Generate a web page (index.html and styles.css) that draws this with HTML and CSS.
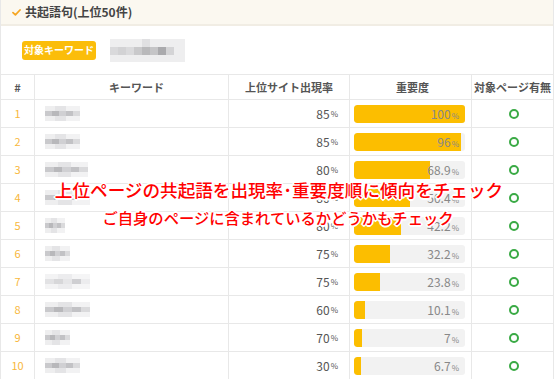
FILE: index.html
```html
<!DOCTYPE html>
<html lang="ja">
<head>
<meta charset="utf-8">
<link rel="stylesheet" href="styles.css">
</head>
<body>
<div class="card">
  <div class="head">
    <svg class="check" width="9" height="7" viewBox="0 0 9 7"><path d="M1 3.6 L3.4 5.8 L8 1" fill="none" stroke="#f5a623" stroke-width="1.8" stroke-linecap="round" stroke-linejoin="round"/></svg>
    <span class="head-title">共起語句(上位50件)</span>
  </div>
  <div class="target">
    <span class="badge">対象キーワード</span>
    <span class="bigblur"><i></i><i></i><i></i><i></i><i></i><i></i><i></i><i></i><i></i></span>
  </div>
  <div class="table">
    <div class="row hrow">
      <div class="c c1">#</div>
      <div class="c c2">キーワード</div>
      <div class="c c3">上位サイト出現率</div>
      <div class="c c4">重要度</div>
      <div class="c c5">対象ページ有無</div>
    </div>
    <div class="row">
      <div class="c c1 num">1</div>
      <div class="c c2"><span class="blur w35"></span></div>
      <div class="c c3 rate">85<small>%</small></div>
      <div class="c c4"><div class="bar"><div class="fill" style="width:100%"></div><span class="val">100<small>%</small></span></div></div>
      <div class="c c5"><span class="ok"></span></div>
    </div>
    <div class="row">
      <div class="c c1 num">2</div>
      <div class="c c2"><span class="blur w35"></span></div>
      <div class="c c3 rate">85<small>%</small></div>
      <div class="c c4"><div class="bar"><div class="fill" style="width:96%"></div><span class="val">96<small>%</small></span></div></div>
      <div class="c c5"><span class="ok"></span></div>
    </div>
    <div class="row">
      <div class="c c1 num">3</div>
      <div class="c c2"><span class="blur w43"></span></div>
      <div class="c c3 rate">80<small>%</small></div>
      <div class="c c4"><div class="bar"><div class="fill" style="width:68.9%"></div><span class="val">68.9<small>%</small></span></div></div>
      <div class="c c5"><span class="ok"></span></div>
    </div>
    <div class="row">
      <div class="c c1 num">4</div>
      <div class="c c2"><span class="blur w45"></span></div>
      <div class="c c3 rate">80<small>%</small></div>
      <div class="c c4"><div class="bar"><div class="fill" style="width:50.4%"></div><span class="val">50.4<small>%</small></span></div></div>
      <div class="c c5"><span class="ok"></span></div>
    </div>
    <div class="row">
      <div class="c c1 num">5</div>
      <div class="c c2"><span class="blur w20"></span></div>
      <div class="c c3 rate">80<small>%</small></div>
      <div class="c c4"><div class="bar"><div class="fill" style="width:42.2%"></div><span class="val">42.2<small>%</small></span></div></div>
      <div class="c c5"><span class="ok"></span></div>
    </div>
    <div class="row">
      <div class="c c1 num">6</div>
      <div class="c c2"><span class="blur w25"></span></div>
      <div class="c c3 rate">75<small>%</small></div>
      <div class="c c4"><div class="bar"><div class="fill" style="width:32.2%"></div><span class="val">32.2<small>%</small></span></div></div>
      <div class="c c5"><span class="ok"></span></div>
    </div>
    <div class="row">
      <div class="c c1 num">7</div>
      <div class="c c2"><span class="blur w45 light"></span></div>
      <div class="c c3 rate">75<small>%</small></div>
      <div class="c c4"><div class="bar"><div class="fill" style="width:23.8%"></div><span class="val">23.8<small>%</small></span></div></div>
      <div class="c c5"><span class="ok"></span></div>
    </div>
    <div class="row">
      <div class="c c1 num">8</div>
      <div class="c c2"><span class="blur w45"></span></div>
      <div class="c c3 rate">60<small>%</small></div>
      <div class="c c4"><div class="bar"><div class="fill" style="width:10.1%"></div><span class="val">10.1<small>%</small></span></div></div>
      <div class="c c5"><span class="ok"></span></div>
    </div>
    <div class="row">
      <div class="c c1 num">9</div>
      <div class="c c2"><span class="blur w25"></span></div>
      <div class="c c3 rate">70<small>%</small></div>
      <div class="c c4"><div class="bar"><div class="fill" style="width:7%"></div><span class="val">7<small>%</small></span></div></div>
      <div class="c c5"><span class="ok"></span></div>
    </div>
    <div class="row">
      <div class="c c1 num">10</div>
      <div class="c c2"><span class="blur w35"></span></div>
      <div class="c c3 rate">30<small>%</small></div>
      <div class="c c4"><div class="bar"><div class="fill" style="width:6.7%"></div><span class="val">6.7<small>%</small></span></div></div>
      <div class="c c5"><span class="ok"></span></div>
    </div>
  </div>
  <div class="overlay">
    <p class="ol1">上位ページの共起語を出現率･重要度順に傾向をチェック</p>
    <p class="ol2">ご自身のページに含まれているかどうかもチェック</p>
  </div>
</div>
</body>
</html>
```
FILE: styles.css
```css
* { box-sizing: border-box; }
html, body { margin: 0; padding: 0; background: #fff; }
body {
  font-family: "Noto Sans CJK JP", "Noto Sans", sans-serif;
  color: #555;
  width: 555px;
  height: 379px;
  overflow: hidden;
}
.card {
  position: relative;
  width: 554px;
  border-left: 1px solid #e8e8e8;
  border-right: 1px solid #e8e8e8;
}
.head {
  height: 26px;
  background: #fbf8f0;
  border-bottom: 2px solid #f1ede4;
  display: flex;
  align-items: center;
  padding-left: 11px;
  gap: 4px;
}
.check { display: block; }
.head-title {
  font-size: 12px;
  font-weight: 700;
  color: #444;
  line-height: 1;
}
.target {
  height: 48px;
  display: flex;
  align-items: center;
  padding-left: 21px;
  gap: 14px;
}
.badge {
  display: inline-flex;
  align-items: center;
  justify-content: center;
  height: 19px;
  width: 74px;
  background: #fbbd0a;
  border-radius: 3px;
  color: #fff;
  font-size: 10px;
  font-weight: 700;
  line-height: 1;
}
.bigblur {
  display: grid;
  grid-template-columns: repeat(9, 8px);
  grid-template-rows: 8px 8px 7px;
  width: 75px;
  height: 23px;
  background: #eeeeef;
}
.bigblur i:nth-child(1) { grid-area: 2 / 1; background: #d9d9db; }
.bigblur i:nth-child(2) { grid-area: 2 / 2; background: #d2d2d4; }
.bigblur i:nth-child(3) { grid-area: 2 / 3; background: #dadadc; }
.bigblur i:nth-child(4) { grid-area: 2 / 4; background: #c9c9cb; }
.bigblur i:nth-child(5) { grid-area: 1 / 5; background: #e0e0e2; }
.bigblur i:nth-child(6) { grid-area: 2 / 5; background: #b9b9bb; }
.bigblur i:nth-child(7) { grid-area: 2 / 6; background: #c5c5c7; }
.bigblur i:nth-child(8) { grid-area: 2 / 7; background: #aaaaad; }
.bigblur i:nth-child(9) { grid-area: 2 / 8; background: #d4d4d6; }

.table { border-top: 1px solid #e8e8e8; }
.row {
  display: grid;
  grid-template-columns: 33px 194px 121px 122px 82px;
  height: 28px;
  border-bottom: 1px solid #e8e8e8;
}
.hrow { height: 25px; }
.c {
  display: flex;
  align-items: center;
  font-size: 11px;
  line-height: 1;
}
.c2, .c3, .c4, .c5 { border-left: 1px solid #e8e8e8; }
.hrow .c {
  justify-content: center;
  font-weight: 700;
  color: #555;
  font-size: 11px;
}
.c1 { justify-content: center; }
.num { color: #f8b73c; font-size: 11px; }
.c2 { padding-left: 10px; }
.rate {
  justify-content: flex-end;
  padding-right: 11px;
  font-size: 12px;
  color: #555;
}
small { font-size: 8px; margin-left: 1px; }
.c4 { padding-left: 4px; }
.bar {
  position: relative;
  width: 111px;
  height: 18px;
  background: #f2f2f2;
  border-radius: 3px;
  overflow: hidden;
  display: flex;
  align-items: center;
  justify-content: flex-end;
}
.fill {
  position: absolute;
  left: 0;
  top: 0;
  bottom: 0;
  background: #fcbe00;
  border-radius: 3px 0 0 3px;
}
.val {
  position: relative;
  padding-right: 6px;
  font-size: 12px;
  color: #888;
}
.c5 { justify-content: center; }
.ok {
  display: block;
  width: 10px;
  height: 10px;
  border: 2px solid #3aaa45;
  border-radius: 50%;
  margin-left: 2px;
}
.blur {
  display: block;
  height: 15px;
  background:
    linear-gradient(90deg, #c9c9cc 0 20%, #b8b8bb 20% 40%, #d0d0d3 40% 60%, #c2c2c5 60% 80%, #dadadc 80% 100%) 0 5px / 100% 5px no-repeat,
    linear-gradient(90deg, #eeeeef 0 30%, #e4e4e6 30% 60%, #f2f2f3 60% 100%);
}
.blur.light {
  background:
    linear-gradient(90deg, #e2e2e4 0 20%, #d7d7d9 20% 40%, #e6e6e8 40% 60%, #cfcfd2 60% 80%, #ececee 80% 100%) 0 5px / 100% 5px no-repeat,
    linear-gradient(90deg, #f3f3f4 0 30%, #ececee 30% 60%, #f5f5f6 60% 100%);
}
.w20 { width: 20px; }
.w25 { width: 25px; }
.w35 { width: 35px; }
.w43 { width: 43px; }
.w45 { width: 45px; }

.overlay {
  position: absolute;
  left: 0;
  top: 177px;
  width: 554px;
  text-align: center;
  color: #ff0000;
  font-weight: 500;
  text-shadow:
    1px 0 0 #fff, -1px 0 0 #fff, 0 1px 0 #fff, 0 -1px 0 #fff,
    1px 1px 0 #fff, -1px -1px 0 #fff, 1px -1px 0 #fff, -1px 1px 0 #fff,
    2px 0 0 #fff, -2px 0 0 #fff, 0 2px 0 #fff, 0 -2px 0 #fff;
}
.overlay p { margin: 0; }
.ol1 { font-size: 17.6px; line-height: 26px; padding-left: 2px; }
.ol2 { font-size: 15.3px; line-height: 28px; }
```
